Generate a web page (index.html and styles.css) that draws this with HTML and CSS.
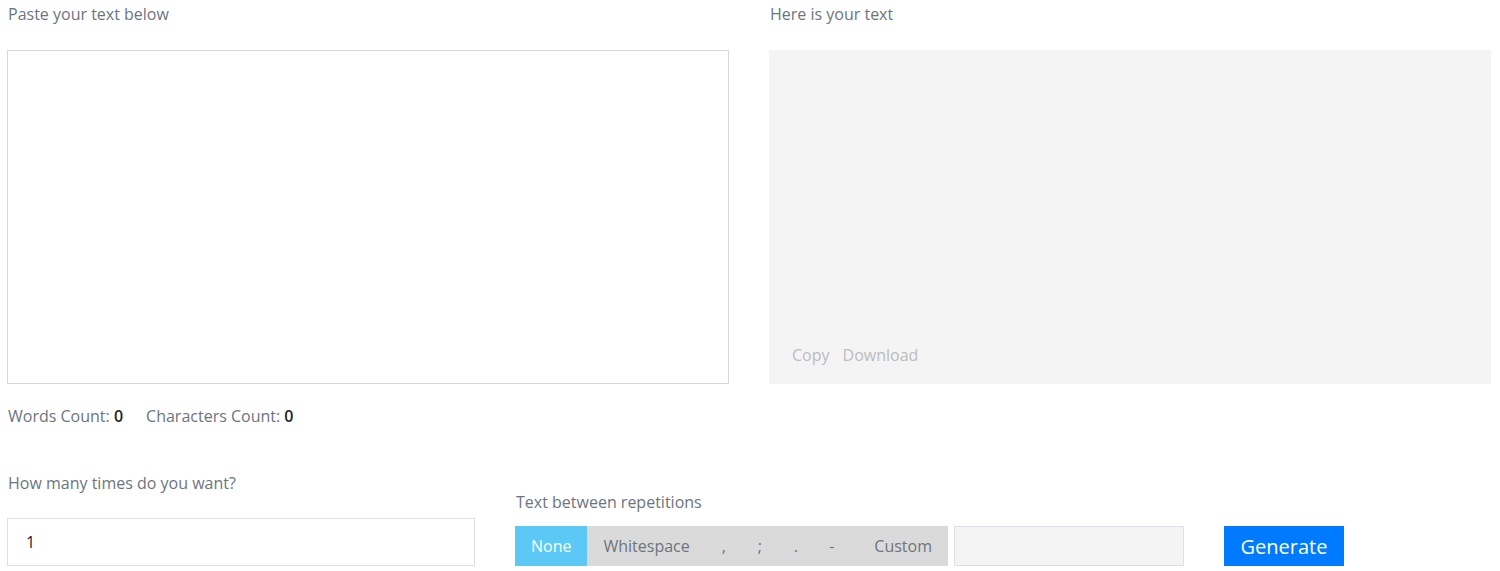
FILE: index.html
```html
<!DOCTYPE html>
<html lang="en">
<head>
    <meta charset="UTF-8">
    <meta name="viewport" content="width=device-width, initial-scale=1.0">
    <title>Text Repeater</title>
    <link rel="stylesheet" href="styles.css">
</head>
<body>
    <main class="panels">
        <section class="panel">
            <label class="label" for="source">Paste your text below</label>
            <textarea id="source" class="source"></textarea>
            <p class="counts">Words Count: <b>0</b><span class="spacer"></span>Characters Count: <b>0</b></p>
        </section>
        <section class="panel">
            <div class="label">Here is your text</div>
            <div class="output">
                <div class="output-actions">
                    <a href="#">Copy</a>
                    <a href="#">Download</a>
                </div>
            </div>
        </section>
    </main>

    <div class="options">
        <div class="times">
            <label class="label" for="times">How many times do you want?</label>
            <input type="text" id="times" class="times-input" value="1">
        </div>
        <div class="separator">
            <div class="label">Text between repetitions</div>
            <div class="separator-row">
                <div class="choices">
                    <button class="choice active">None</button>
                    <button class="choice">Whitespace</button>
                    <button class="choice">,</button>
                    <button class="choice">;</button>
                    <button class="choice">.</button>
                    <button class="choice">-</button>
                    <button class="choice">Custom</button>
                </div>
                <input type="text" class="custom-input">
                <button class="generate">Generate</button>
            </div>
        </div>
    </div>
</body>
</html>
```

FILE: styles.css
```css
body {
    margin: 0;
    padding: 0 9px 0 7px;
    font-family: 'Open Sans', 'Noto Sans', sans-serif;
    font-size: 16px;
    color: #6c757d;
    background-color: #fff;
}
.panels {
    display: flex;
    gap: 40px;
    padding-top: 2px;
}
.panel {
    flex: 1;
    display: flex;
    flex-direction: column;
}
.label {
    display: block;
    line-height: 24px;
    padding-left: 1px;
    color: #6c757d;
}
.source {
    margin-top: 24px;
    height: 334px;
    box-sizing: border-box;
    border: 1px solid #d6dadf;
    resize: none;
    font-family: inherit;
    padding: 10px;
}
.output {
    margin-top: 24px;
    height: 334px;
    background-color: #f4f4f4;
    display: flex;
    align-items: flex-end;
}
.output-actions {
    display: flex;
    gap: 13px;
    padding: 0 0 17px 23px;
    line-height: 24px;
}
.output-actions a {
    color: #bcbcbc;
    text-decoration: none;
}
.counts {
    margin: 20px 0 0;
    line-height: 24px;
    padding-left: 1px;
}
.counts b {
    color: #212529;
    font-weight: 600;
}
.spacer {
    display: inline-block;
    width: 23px;
}
.options {
    display: flex;
    align-items: flex-end;
    gap: 40px;
    margin-top: 43px;
}
.times {
    width: 468px;
}
.times-input {
    display: block;
    width: 100%;
    box-sizing: border-box;
    height: 48px;
    margin-top: 23px;
    border: 1px solid #dcdfe3;
    padding: 0 18px;
    font-family: inherit;
    font-size: 16px;
    color: #212529;
}
.separator .label {
    margin-bottom: 12px;
}
.separator-row {
    display: flex;
    align-items: stretch;
}
.choices {
    display: flex;
    background-color: #dadada;
    height: 40px;
    width: 433px;
}
.choice {
    border: none;
    background: none;
    font-family: inherit;
    font-size: 16px;
    color: #6c757d;
    padding: 0 16px;
    cursor: pointer;
}
.choice.active {
    background-color: #5bc8f5;
    color: #fff;
}
.choice:nth-child(3),
.choice:nth-child(4),
.choice:nth-child(5),
.choice:nth-child(6) {
    width: 36px;
    padding: 0;
}
.choice:last-child {
    margin-left: auto;
}
.custom-input {
    width: 230px;
    height: 40px;
    box-sizing: border-box;
    margin-left: 6px;
    background-color: #f4f4f4;
    border: 1px solid #dcdfe3;
}
.generate {
    margin-left: 40px;
    width: 120px;
    height: 40px;
    border: none;
    background-color: #007bff;
    color: #fff;
    font-family: inherit;
    font-size: 20px;
    cursor: pointer;
}
```
